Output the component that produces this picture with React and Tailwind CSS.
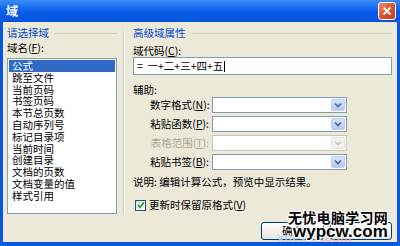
import React from "react";

const F = { fontFamily: '"Noto Sans CJK SC", "Noto Sans", sans-serif' };

function Combo({ disabled }) {
  return (
    <div
      className={`w-[135px] h-[16px] flex justify-end items-stretch p-[1px] bg-white border ${
        disabled ? "border-[#C9C7BA]" : "border-[#7F9DB9]"
      }`}
    >
      <div
        className={`w-[14px] flex items-center justify-center rounded-[2px] ${
          disabled
            ? "bg-[#F2F2EE] border border-[#E2E2DA]"
            : "bg-gradient-to-b from-[#D6E3FD] to-[#B5C9F7] border border-[#B9CCF5]"
        }`}
      >
        <svg width="8" height="6" viewBox="0 0 8 6">
          <path
            d="M1 1.5 L4 4.5 L7 1.5"
            fill="none"
            stroke={disabled ? "#C8C8C0" : "#4D6185"}
            strokeWidth="1.6"
          />
        </svg>
      </div>
    </div>
  );
}

function Row({ label, k, disabled }) {
  return (
    <div className="flex items-center h-[16px] pl-[17px]">
      <div
        className={`w-[59px] text-right whitespace-nowrap ${
          disabled ? "text-[#ACA899]" : "text-black"
        }`}
      >
        {label}(<u>{k}</u>):
      </div>
      <div className="ml-[3px]">
        <Combo disabled={disabled} />
      </div>
    </div>
  );
}

const items = [
  "公式",
  "跳至文件",
  "当前页码",
  "书签页码",
  "本节总页数",
  "自动序列号",
  "标记目录项",
  "当前时间",
  "创建目录",
  "文档的页数",
  "文档变量的值",
  "样式引用",
];

export default function App() {
  const ws =
    "[text-shadow:1px_1px_0_#fff,-1px_-1px_0_#fff,1px_-1px_0_#fff,-1px_1px_0_#fff,0_1px_0_#fff,0_-1px_0_#fff,1px_0_0_#fff,-1px_0_0_#fff]";
  return (
    <div
      className="relative w-[400px] h-[246px] flex flex-col bg-[#0A56DE] text-[10.5px] leading-[12px] overflow-hidden"
      style={F}
    >
      {/* title bar */}
      <div className="h-[22px] flex items-center justify-between pl-[6px] pr-[4px] bg-gradient-to-b from-[#3A8CF8] via-[#0A5EEA] to-[#0653DC]">
        <span className="text-white font-bold text-[12px] leading-[14px]">域</span>
        <div className="w-[18px] h-[18px] rounded-[3px] border border-white bg-gradient-to-br from-[#EE8D6E] via-[#D9532F] to-[#C2431F] flex items-center justify-center">
          <svg width="10" height="10" viewBox="0 0 10 10">
            <path d="M1.5 1.5 L8.5 8.5 M8.5 1.5 L1.5 8.5" stroke="#fff" strokeWidth="1.8" />
          </svg>
        </div>
      </div>

      {/* body */}
      <div className="flex-1 mx-[3px] mb-[4px] bg-[#ECE9D8] flex">
        {/* left column */}
        <div className="w-[114px] pl-[4px] pt-[5px] flex flex-col">
          <div className="flex items-center h-[12px]">
            <span className="text-[#0046D5] whitespace-nowrap">请选择域</span>
            <div className="flex-1 h-px bg-[#D0D0BF] ml-[6px]" />
          </div>
          <div className="mt-[3px] h-[12px] whitespace-nowrap">
            域名(<u>F</u>):
          </div>
          <div className="mt-[4px] w-[110px] h-[156px] bg-white border border-[#7F9DB9] pt-[1px] px-[1px]">
            {items.map((t, i) => (
              <div
                key={t}
                className={`h-[11.8px] leading-[11.8px] pl-[3px] whitespace-nowrap ${
                  i === 0 ? "bg-[#316AC5] text-white" : "text-black"
                }`}
              >
                {t}
              </div>
            ))}
          </div>
        </div>

        {/* separator */}
        <div className="ml-[6px] mt-[6px] h-[187px] w-[2px] flex">
          <div className="w-px bg-[#D0D0BF]" />
          <div className="w-px bg-white" />
        </div>

        {/* right column */}
        <div className="ml-[8px] w-[259px] pt-[5px] flex flex-col">
          <div className="flex items-center h-[12px]">
            <span className="text-[#0046D5] whitespace-nowrap">高级域属性</span>
            <div className="flex-1 h-px bg-[#D0D0BF] ml-[6px]" />
          </div>
          <div className="mt-[6px] h-[12px] whitespace-nowrap">
            域代码(<u>C</u>):
          </div>
          <div className="h-[18px] bg-white border border-[#7F9DB9] flex items-center pl-[3px] whitespace-nowrap">
            =&nbsp;&nbsp;一+二+三+四+五
            <span className="inline-block w-px h-[11px] bg-black ml-[1px]" />
          </div>
          <div className="mt-[9px] h-[12px]">辅助:</div>
          <div className="mt-[1px] flex flex-col gap-[3px]">
            <Row label="数字格式" k="N" />
            <Row label="粘贴函数" k="P" />
            <Row label="表格范围" k="T" disabled />
            <Row label="粘贴书签" k="B" />
          </div>
          <div className="mt-[6px] h-[12px] whitespace-nowrap">
            说明: 编辑计算公式，预览中显示结果。
          </div>
          <div className="mt-[11px] h-[12px] flex items-center pl-[2px]">
            <div className="w-[11px] h-[11px] border border-[#1C5180] bg-gradient-to-br from-[#DCDCD7] to-white flex items-center justify-center">
              <svg width="8" height="8" viewBox="0 0 8 8">
                <path d="M1 4 L3 6.2 L7 1.5" fill="none" stroke="#21A121" strokeWidth="1.7" />
              </svg>
            </div>
            <span className="ml-[3px] whitespace-nowrap">
              更新时保留原格式(<u>V</u>)
            </span>
          </div>
          <div className="mt-[11px] flex justify-end gap-[6px]">
            <div className="w-[63px] h-[18px] rounded-[3px] border border-[#003C74] bg-gradient-to-b from-white to-[#E6E5DE] flex items-center justify-center">
              确定
            </div>
            <div className="w-[62px] h-[18px] rounded-[3px] border border-[#003C74] bg-gradient-to-b from-white to-[#E6E5DE]" />
          </div>
        </div>
      </div>

      {/* watermark */}
      <div
        className="absolute left-[277px] top-[231px] text-[13px] leading-[14px] font-bold text-[#B9D3EA] opacity-80 whitespace-nowrap"
        style={{ fontFamily: '"Liberation Sans", sans-serif' }}
      >
        xuexila<span className="text-[#E8B8C8]">.com</span>
      </div>
      <div
        className={`absolute left-[288px] top-[209px] text-[14px] leading-[16px] font-bold text-black whitespace-nowrap tracking-[0.3px] ${ws}`}
      >
        无忧电脑学习网
      </div>
      <div
        className={`absolute left-[293px] top-[223px] text-[17px] leading-[18px] font-bold text-black whitespace-nowrap ${ws}`}
        style={{ fontFamily: '"Liberation Sans", sans-serif' }}
      >
        wypcw.com
      </div>
    </div>
  );
}
